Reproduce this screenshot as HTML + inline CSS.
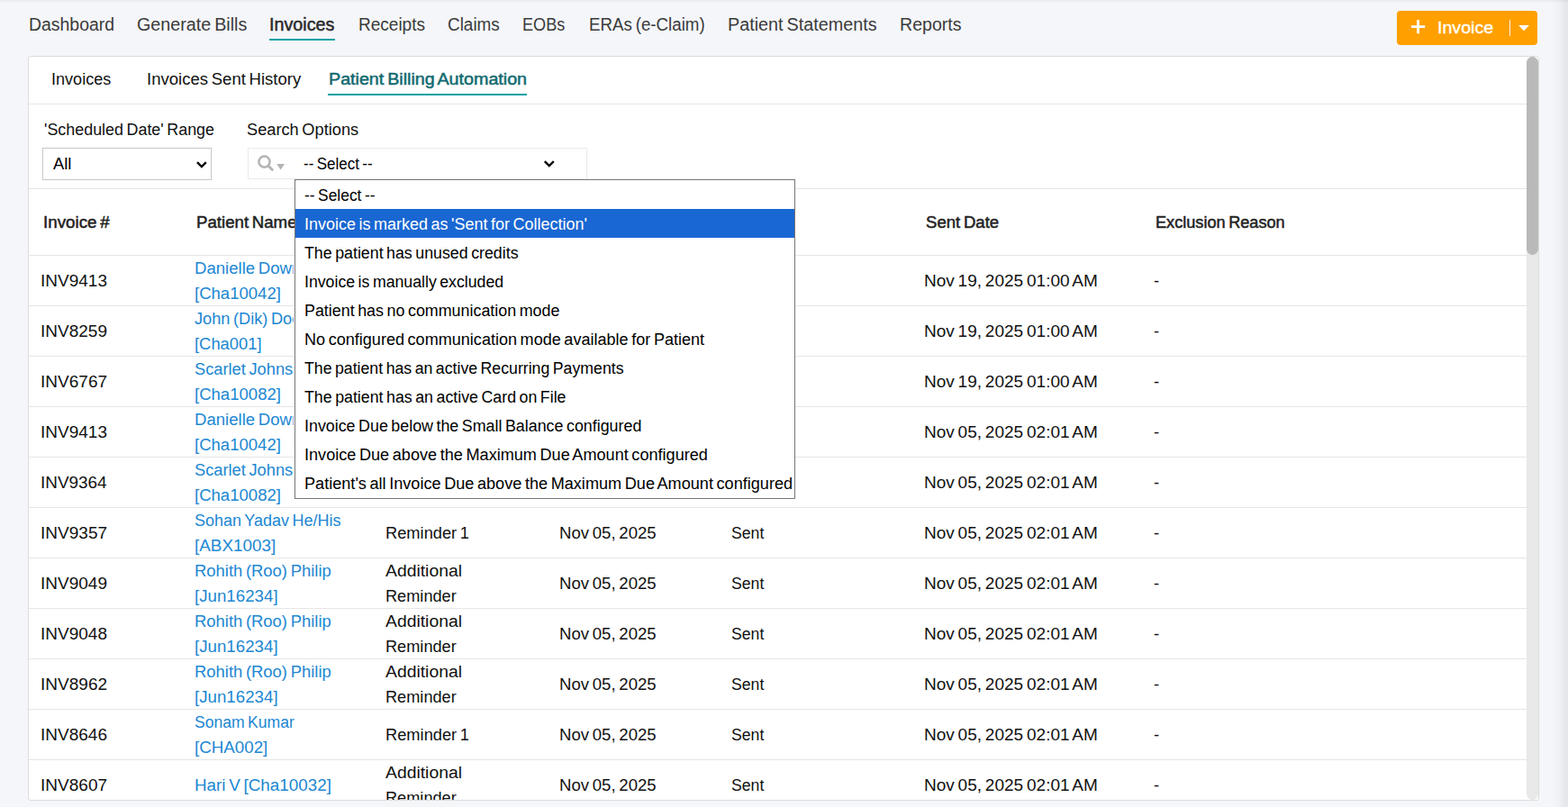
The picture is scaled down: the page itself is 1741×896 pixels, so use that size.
<!DOCTYPE html>
<html lang="en"><head><meta charset="utf-8"><title>Invoices - Patient Billing Automation</title>
<style>
*{box-sizing:border-box;margin:0;padding:0}
html,body{width:1741px;height:896px;overflow:hidden;background:#f5f6fa}
body{font-family:"Liberation Sans",sans-serif;color:#111;position:relative}
.t{position:absolute;display:block;white-space:nowrap;transform-origin:0 0;text-decoration:none;word-spacing:-0.08em}
#app{position:absolute;left:0;top:0;width:1741px;height:896px;overflow:hidden;background:#f5f6fa}
.topshadow{position:absolute;left:0;top:0;width:1741px;height:4px;background:linear-gradient(to bottom,rgba(0,0,0,.06),rgba(0,0,0,.028) 38%,rgba(0,0,0,.008) 70%,rgba(0,0,0,0))}
.rightshadow{position:absolute;right:0;top:0;width:18px;height:896px;background:linear-gradient(to right,rgba(0,0,0,0),rgba(0,0,0,.02) 44%,rgba(0,0,0,.05) 72%,rgba(0,0,0,.066))}
.topnav{position:absolute;left:0;top:0;width:1741px;height:62px}
.navline{position:absolute;left:299px;top:43px;width:73px;height:2px;background:#0aa1a4}
.btn{position:absolute;left:1551px;top:12px;width:156px;height:38px;border:0;border-radius:4px;background:#ffa000;font-family:inherit;display:block}
.btn svg{position:absolute;left:0;top:0}
.card{position:absolute;left:31px;top:62px;width:1678px;height:827px;background:#fff;border:1px solid #dcdcdc;border-radius:3px;overflow:hidden}
.tabs{position:absolute;left:0;top:0;width:1663px;height:53px;border-bottom:1px solid #e6e6e6}
.tabline{position:absolute;left:332px;top:41px;width:221px;height:2px;background:#0aa1a4}
.filters{position:absolute;left:0;top:53px;width:1663px;height:94px;border-bottom:1px solid #e6e6e6}
.sel{position:absolute;left:15px;top:48px;width:188px;height:36px;border:1px solid #c6c6c6;background:#fff}
.srch{position:absolute;left:243px;top:48px;width:377px;height:35px;border:1px solid #ebebee;background:#fff}
.ico{position:absolute;left:0;top:0}
.thead{position:absolute;left:0;top:147px;width:1663px;height:74px;border-bottom:1px solid #e6e6e6}
.row{position:absolute;left:0;width:1663px;height:56px;border-bottom:1px solid #e6e6e6}
.cell{position:absolute;left:0;top:0}
.cell.clip{width:294px;height:55px;overflow:hidden}
.scroll{position:absolute;left:1663px;top:0;width:13px;height:825px;background:#e8e8e8;border-radius:7px}
.thumb{position:absolute;left:0;top:0;width:13px;height:220px;background:#b9b9b9;border-radius:6.5px}
.dropdown{position:absolute;left:327px;top:199px;width:556px;height:355px;background:#fff;border:1px solid #767676;list-style:none}
.dropdown li{position:absolute;left:0;width:554px;height:32px}
.dropdown li.hl{background:#1967d2}
</style></head><body>
<div id="app">
<div class="topshadow"></div><div class="rightshadow"></div>
<nav class="topnav">
<a class="t" style="left:31.69px;top:16.00px;font-size:19.5px;line-height:22px;transform:scaleX(0.9966);color:#3b3b3b;">Dashboard</a>
<a class="t" style="left:151.69px;top:16.00px;font-size:19.5px;line-height:22px;transform:scaleX(1.0119);color:#3b3b3b;">Generate Bills</a>
<a class="t on" style="left:299.40px;top:15.80px;font-size:19.5px;line-height:22px;transform:scaleX(1.0121);color:#2a2a2a;-webkit-text-stroke:0.5px currentColor;">Invoices</a>
<a class="t" style="left:397.82px;top:16.00px;font-size:19.5px;line-height:22px;transform:scaleX(0.9753);color:#3b3b3b;">Receipts</a>
<a class="t" style="left:497.35px;top:16.00px;font-size:19.5px;line-height:22px;transform:scaleX(0.9705);color:#3b3b3b;">Claims</a>
<a class="t" style="left:580.12px;top:16.00px;font-size:19.5px;line-height:22px;transform:scaleX(0.9302);color:#3b3b3b;">EOBs</a>
<a class="t" style="left:653.86px;top:16.00px;font-size:19.5px;line-height:22px;transform:scaleX(0.9615);color:#3b3b3b;">ERAs (e-Claim)</a>
<a class="t" style="left:807.58px;top:16.00px;font-size:19.5px;line-height:22px;transform:scaleX(1.0145);color:#3b3b3b;">Patient Statements</a>
<a class="t" style="left:998.61px;top:16.00px;font-size:19.5px;line-height:22px;transform:scaleX(1.0047);color:#3b3b3b;">Reports</a>
<i class="navline"></i>
</nav>
<button class="btn" type="button">
<svg width="156" height="38" viewBox="0 0 156 38"><path d="M16 17.6h15.2M23.6 10v15.2" stroke="#fff" stroke-width="2.9" fill="none"/><path d="M125.5 10v18" stroke="#fff" stroke-width="1" opacity=".85"/><path d="M135 16h12l-6 6.2z" fill="#fff"/></svg>
<span class="t bt" style="left:44.97px;top:7.60px;font-size:18.6px;line-height:21px;transform:scaleX(1.0546);color:#fff;-webkit-text-stroke:0.35px #fff;">Invoice</span>
</button>
<main class="card">
<div class="tabs">
<a class="t" style="left:25.39px;top:15.00px;font-size:18px;line-height:20px;transform:scaleX(1.0031);color:#111;">Invoices</a>
<a class="t" style="left:131.25px;top:15.00px;font-size:18px;line-height:20px;transform:scaleX(1.0302);color:#111;">Invoices Sent History</a>
<a class="t on" style="left:333.18px;top:14.80px;font-size:18px;line-height:20px;transform:scaleX(1.0935);color:#116a70;-webkit-text-stroke:0.5px currentColor;">Patient Billing Automation</a>
<i class="tabline"></i>
</div>
<div class="filters">
<label class="t" style="left:16.65px;top:18.00px;font-size:18px;line-height:20px;transform:scaleX(0.9941);color:#111;">'Scheduled Date' Range</label>
<label class="t" style="left:242.33px;top:18.00px;font-size:18px;line-height:20px;transform:scaleX(1.0128);color:#111;">Search Options</label>
<div class="sel">
<span class="t" style="left:10.96px;top:7.00px;font-size:18px;line-height:20px;transform:scaleX(1.0195);color:#000;">All</span>
<svg class="ico" width="186" height="34" viewBox="0 0 186 34"><path d="M171 15.1l4.9 4.9 4.9-4.9" stroke="#000" stroke-width="2.3" fill="none"/></svg>
</div>
<div class="srch">
<svg class="ico" width="375" height="33" viewBox="0 0 375 33"><circle cx="17.5" cy="14.6" r="6.1" stroke="#b3b3b3" stroke-width="2.5" fill="none"/><path d="M22.1 19.2l4.2 4.2" stroke="#b3b3b3" stroke-width="2.8" stroke-linecap="round"/><path d="M31.2 17h8.8l-4.4 6.6z" fill="#b3b3b3"/><path d="M328.8 14.1l5 5 5-5" stroke="#000" stroke-width="2.3" fill="none"/></svg>
<span class="t" style="left:61.12px;top:7.00px;font-size:18px;line-height:20px;transform:scaleX(0.9443);color:#000;">-- Select --</span>
</div>
</div>
<div class="thead" role="row">
<span class="t" style="left:15.74px;top:26.80px;font-size:18px;line-height:20px;transform:scaleX(1.0425);color:#222;-webkit-text-stroke:0.5px currentColor;">Invoice #</span>
<span class="t" style="left:186.42px;top:26.80px;font-size:18px;line-height:20px;transform:scaleX(1.0363);color:#222;-webkit-text-stroke:0.5px currentColor;">Patient Name</span>
<span class="t" style="left:398.61px;top:26.80px;font-size:18px;line-height:20px;transform:scaleX(0.9918);color:#222;-webkit-text-stroke:0.5px currentColor;">Reminder Type</span>
<span class="t" style="left:591.45px;top:26.80px;font-size:18px;line-height:20px;transform:scaleX(1.0026);color:#222;-webkit-text-stroke:0.5px currentColor;">Scheduled Date</span>
<span class="t" style="left:782.39px;top:26.80px;font-size:18px;line-height:20px;transform:scaleX(1.0206);color:#222;-webkit-text-stroke:0.5px currentColor;">Status</span>
<span class="t" style="left:996.38px;top:26.80px;font-size:18px;line-height:20px;transform:scaleX(1.0326);color:#222;-webkit-text-stroke:0.5px currentColor;">Sent Date</span>
<span class="t" style="left:1251.35px;top:26.80px;font-size:18px;line-height:20px;transform:scaleX(1.0072);color:#222;-webkit-text-stroke:0.5px currentColor;">Exclusion Reason</span>
</div>
<div class="row" role="row" style="top:221px">
<div class="cell c1" role="cell"><span class="t" style="left:13.10px;top:18.00px;font-size:18px;line-height:20px;transform:scaleX(1.0564);color:#111;">INV9413</span></div>
<div class="cell c2 clip" role="cell"><a class="t" style="left:183.97px;top:4.00px;font-size:18px;line-height:20px;transform:scaleX(1.0326);color:#2087d2;">Danielle Downey</a><a class="t" style="left:183.97px;top:32.00px;font-size:18px;line-height:20px;transform:scaleX(1.0300);color:#2087d2;">[Cha10042]</a></div>
<div class="cell c3" role="cell"><span class="t" style="left:396.06px;top:18.00px;font-size:18px;line-height:20px;transform:scaleX(1.0151);color:#111;">Reminder 1</span></div>
<div class="cell c4" role="cell"><span class="t" style="left:588.86px;top:18.00px;font-size:18px;line-height:20px;transform:scaleX(1.0332);color:#111;">Nov 19, 2025</span></div>
<div class="cell c5" role="cell"><span class="t" style="left:779.96px;top:18.00px;font-size:18px;line-height:20px;transform:scaleX(0.9818);color:#111;">Sent</span></div>
<div class="cell c6" role="cell"><span class="t" style="left:993.76px;top:18.00px;font-size:18px;line-height:20px;transform:scaleX(1.0576);color:#111;">Nov 19, 2025 01:00 AM</span></div>
<div class="cell c7" role="cell"><span class="t" style="left:1249.19px;top:18.00px;font-size:18px;line-height:20px;transform:scaleX(1.0176);color:#111;">-</span></div>
</div>
<div class="row" role="row" style="top:277px">
<div class="cell c1" role="cell"><span class="t" style="left:13.10px;top:18.00px;font-size:18px;line-height:20px;transform:scaleX(1.0559);color:#111;">INV8259</span></div>
<div class="cell c2 clip" role="cell"><a class="t" style="left:183.97px;top:4.00px;font-size:18px;line-height:20px;transform:scaleX(1.0094);color:#2087d2;">John (Dik) Doe</a><a class="t" style="left:183.97px;top:32.00px;font-size:18px;line-height:20px;transform:scaleX(1.0215);color:#2087d2;">[Cha001]</a></div>
<div class="cell c3" role="cell"><span class="t" style="left:396.06px;top:18.00px;font-size:18px;line-height:20px;transform:scaleX(1.0151);color:#111;">Reminder 1</span></div>
<div class="cell c4" role="cell"><span class="t" style="left:588.86px;top:18.00px;font-size:18px;line-height:20px;transform:scaleX(1.0332);color:#111;">Nov 19, 2025</span></div>
<div class="cell c5" role="cell"><span class="t" style="left:779.96px;top:18.00px;font-size:18px;line-height:20px;transform:scaleX(0.9818);color:#111;">Sent</span></div>
<div class="cell c6" role="cell"><span class="t" style="left:993.76px;top:18.00px;font-size:18px;line-height:20px;transform:scaleX(1.0576);color:#111;">Nov 19, 2025 01:00 AM</span></div>
<div class="cell c7" role="cell"><span class="t" style="left:1249.19px;top:18.00px;font-size:18px;line-height:20px;transform:scaleX(1.0176);color:#111;">-</span></div>
</div>
<div class="row" role="row" style="top:333px">
<div class="cell c1" role="cell"><span class="t" style="left:13.10px;top:18.00px;font-size:18px;line-height:20px;transform:scaleX(1.0578);color:#111;">INV6767</span></div>
<div class="cell c2 clip" role="cell"><a class="t" style="left:183.97px;top:4.00px;font-size:18px;line-height:20px;transform:scaleX(1.0149);color:#2087d2;">Scarlet Johnson</a><a class="t" style="left:183.97px;top:32.00px;font-size:18px;line-height:20px;transform:scaleX(1.0307);color:#2087d2;">[Cha10082]</a></div>
<div class="cell c3" role="cell"><span class="t" style="left:396.06px;top:18.00px;font-size:18px;line-height:20px;transform:scaleX(1.0151);color:#111;">Reminder 1</span></div>
<div class="cell c4" role="cell"><span class="t" style="left:588.86px;top:18.00px;font-size:18px;line-height:20px;transform:scaleX(1.0332);color:#111;">Nov 19, 2025</span></div>
<div class="cell c5" role="cell"><span class="t" style="left:779.96px;top:18.00px;font-size:18px;line-height:20px;transform:scaleX(0.9818);color:#111;">Sent</span></div>
<div class="cell c6" role="cell"><span class="t" style="left:993.76px;top:18.00px;font-size:18px;line-height:20px;transform:scaleX(1.0576);color:#111;">Nov 19, 2025 01:00 AM</span></div>
<div class="cell c7" role="cell"><span class="t" style="left:1249.19px;top:18.00px;font-size:18px;line-height:20px;transform:scaleX(1.0176);color:#111;">-</span></div>
</div>
<div class="row" role="row" style="top:389px">
<div class="cell c1" role="cell"><span class="t" style="left:13.10px;top:18.00px;font-size:18px;line-height:20px;transform:scaleX(1.0564);color:#111;">INV9413</span></div>
<div class="cell c2 clip" role="cell"><a class="t" style="left:183.97px;top:4.00px;font-size:18px;line-height:20px;transform:scaleX(1.0326);color:#2087d2;">Danielle Downey</a><a class="t" style="left:183.97px;top:32.00px;font-size:18px;line-height:20px;transform:scaleX(1.0300);color:#2087d2;">[Cha10042]</a></div>
<div class="cell c3" role="cell"><span class="t" style="left:396.06px;top:4.00px;font-size:18px;line-height:20px;transform:scaleX(1.0749);color:#111;">Additional</span><span class="t" style="left:396.06px;top:32.00px;font-size:18px;line-height:20px;transform:scaleX(1.0090);color:#111;">Reminder</span></div>
<div class="cell c4" role="cell"><span class="t" style="left:588.86px;top:18.00px;font-size:18px;line-height:20px;transform:scaleX(1.0332);color:#111;">Nov 05, 2025</span></div>
<div class="cell c5" role="cell"><span class="t" style="left:779.96px;top:18.00px;font-size:18px;line-height:20px;transform:scaleX(0.9818);color:#111;">Sent</span></div>
<div class="cell c6" role="cell"><span class="t" style="left:993.76px;top:18.00px;font-size:18px;line-height:20px;transform:scaleX(1.0576);color:#111;">Nov 05, 2025 02:01 AM</span></div>
<div class="cell c7" role="cell"><span class="t" style="left:1249.19px;top:18.00px;font-size:18px;line-height:20px;transform:scaleX(1.0176);color:#111;">-</span></div>
</div>
<div class="row" role="row" style="top:445px">
<div class="cell c1" role="cell"><span class="t" style="left:13.10px;top:18.00px;font-size:18px;line-height:20px;transform:scaleX(1.0514);color:#111;">INV9364</span></div>
<div class="cell c2 clip" role="cell"><a class="t" style="left:183.97px;top:4.00px;font-size:18px;line-height:20px;transform:scaleX(1.0149);color:#2087d2;">Scarlet Johnson</a><a class="t" style="left:183.97px;top:32.00px;font-size:18px;line-height:20px;transform:scaleX(1.0307);color:#2087d2;">[Cha10082]</a></div>
<div class="cell c3" role="cell"><span class="t" style="left:396.06px;top:18.00px;font-size:18px;line-height:20px;transform:scaleX(1.0151);color:#111;">Reminder 1</span></div>
<div class="cell c4" role="cell"><span class="t" style="left:588.86px;top:18.00px;font-size:18px;line-height:20px;transform:scaleX(1.0332);color:#111;">Nov 05, 2025</span></div>
<div class="cell c5" role="cell"><span class="t" style="left:779.96px;top:18.00px;font-size:18px;line-height:20px;transform:scaleX(0.9818);color:#111;">Sent</span></div>
<div class="cell c6" role="cell"><span class="t" style="left:993.76px;top:18.00px;font-size:18px;line-height:20px;transform:scaleX(1.0576);color:#111;">Nov 05, 2025 02:01 AM</span></div>
<div class="cell c7" role="cell"><span class="t" style="left:1249.19px;top:18.00px;font-size:18px;line-height:20px;transform:scaleX(1.0176);color:#111;">-</span></div>
</div>
<div class="row" role="row" style="top:501px">
<div class="cell c1" role="cell"><span class="t" style="left:13.10px;top:18.00px;font-size:18px;line-height:20px;transform:scaleX(1.0578);color:#111;">INV9357</span></div>
<div class="cell c2" role="cell"><a class="t" style="left:183.97px;top:4.00px;font-size:18px;line-height:20px;transform:scaleX(1.0003);color:#2087d2;">Sohan Yadav He/His</a><a class="t" style="left:183.97px;top:32.00px;font-size:18px;line-height:20px;transform:scaleX(1.0483);color:#2087d2;">[ABX1003]</a></div>
<div class="cell c3" role="cell"><span class="t" style="left:396.06px;top:18.00px;font-size:18px;line-height:20px;transform:scaleX(1.0151);color:#111;">Reminder 1</span></div>
<div class="cell c4" role="cell"><span class="t" style="left:588.86px;top:18.00px;font-size:18px;line-height:20px;transform:scaleX(1.0332);color:#111;">Nov 05, 2025</span></div>
<div class="cell c5" role="cell"><span class="t" style="left:779.96px;top:18.00px;font-size:18px;line-height:20px;transform:scaleX(0.9818);color:#111;">Sent</span></div>
<div class="cell c6" role="cell"><span class="t" style="left:993.76px;top:18.00px;font-size:18px;line-height:20px;transform:scaleX(1.0576);color:#111;">Nov 05, 2025 02:01 AM</span></div>
<div class="cell c7" role="cell"><span class="t" style="left:1249.19px;top:18.00px;font-size:18px;line-height:20px;transform:scaleX(1.0176);color:#111;">-</span></div>
</div>
<div class="row" role="row" style="top:557px">
<div class="cell c1" role="cell"><span class="t" style="left:13.10px;top:18.00px;font-size:18px;line-height:20px;transform:scaleX(1.0559);color:#111;">INV9049</span></div>
<div class="cell c2" role="cell"><a class="t" style="left:183.97px;top:4.00px;font-size:18px;line-height:20px;transform:scaleX(1.0239);color:#2087d2;">Rohith (Roo) Philip</a><a class="t" style="left:183.97px;top:32.00px;font-size:18px;line-height:20px;transform:scaleX(1.0394);color:#2087d2;">[Jun16234]</a></div>
<div class="cell c3" role="cell"><span class="t" style="left:396.06px;top:4.00px;font-size:18px;line-height:20px;transform:scaleX(1.0749);color:#111;">Additional</span><span class="t" style="left:396.06px;top:32.00px;font-size:18px;line-height:20px;transform:scaleX(1.0090);color:#111;">Reminder</span></div>
<div class="cell c4" role="cell"><span class="t" style="left:588.86px;top:18.00px;font-size:18px;line-height:20px;transform:scaleX(1.0332);color:#111;">Nov 05, 2025</span></div>
<div class="cell c5" role="cell"><span class="t" style="left:779.96px;top:18.00px;font-size:18px;line-height:20px;transform:scaleX(0.9818);color:#111;">Sent</span></div>
<div class="cell c6" role="cell"><span class="t" style="left:993.76px;top:18.00px;font-size:18px;line-height:20px;transform:scaleX(1.0576);color:#111;">Nov 05, 2025 02:01 AM</span></div>
<div class="cell c7" role="cell"><span class="t" style="left:1249.19px;top:18.00px;font-size:18px;line-height:20px;transform:scaleX(1.0176);color:#111;">-</span></div>
</div>
<div class="row" role="row" style="top:613px">
<div class="cell c1" role="cell"><span class="t" style="left:13.10px;top:18.00px;font-size:18px;line-height:20px;transform:scaleX(1.0557);color:#111;">INV9048</span></div>
<div class="cell c2" role="cell"><a class="t" style="left:183.97px;top:4.00px;font-size:18px;line-height:20px;transform:scaleX(1.0239);color:#2087d2;">Rohith (Roo) Philip</a><a class="t" style="left:183.97px;top:32.00px;font-size:18px;line-height:20px;transform:scaleX(1.0394);color:#2087d2;">[Jun16234]</a></div>
<div class="cell c3" role="cell"><span class="t" style="left:396.06px;top:4.00px;font-size:18px;line-height:20px;transform:scaleX(1.0749);color:#111;">Additional</span><span class="t" style="left:396.06px;top:32.00px;font-size:18px;line-height:20px;transform:scaleX(1.0090);color:#111;">Reminder</span></div>
<div class="cell c4" role="cell"><span class="t" style="left:588.86px;top:18.00px;font-size:18px;line-height:20px;transform:scaleX(1.0332);color:#111;">Nov 05, 2025</span></div>
<div class="cell c5" role="cell"><span class="t" style="left:779.96px;top:18.00px;font-size:18px;line-height:20px;transform:scaleX(0.9818);color:#111;">Sent</span></div>
<div class="cell c6" role="cell"><span class="t" style="left:993.76px;top:18.00px;font-size:18px;line-height:20px;transform:scaleX(1.0576);color:#111;">Nov 05, 2025 02:01 AM</span></div>
<div class="cell c7" role="cell"><span class="t" style="left:1249.19px;top:18.00px;font-size:18px;line-height:20px;transform:scaleX(1.0176);color:#111;">-</span></div>
</div>
<div class="row" role="row" style="top:669px">
<div class="cell c1" role="cell"><span class="t" style="left:13.10px;top:18.00px;font-size:18px;line-height:20px;transform:scaleX(1.0578);color:#111;">INV8962</span></div>
<div class="cell c2" role="cell"><a class="t" style="left:183.97px;top:4.00px;font-size:18px;line-height:20px;transform:scaleX(1.0239);color:#2087d2;">Rohith (Roo) Philip</a><a class="t" style="left:183.97px;top:32.00px;font-size:18px;line-height:20px;transform:scaleX(1.0394);color:#2087d2;">[Jun16234]</a></div>
<div class="cell c3" role="cell"><span class="t" style="left:396.06px;top:4.00px;font-size:18px;line-height:20px;transform:scaleX(1.0749);color:#111;">Additional</span><span class="t" style="left:396.06px;top:32.00px;font-size:18px;line-height:20px;transform:scaleX(1.0090);color:#111;">Reminder</span></div>
<div class="cell c4" role="cell"><span class="t" style="left:588.86px;top:18.00px;font-size:18px;line-height:20px;transform:scaleX(1.0332);color:#111;">Nov 05, 2025</span></div>
<div class="cell c5" role="cell"><span class="t" style="left:779.96px;top:18.00px;font-size:18px;line-height:20px;transform:scaleX(0.9818);color:#111;">Sent</span></div>
<div class="cell c6" role="cell"><span class="t" style="left:993.76px;top:18.00px;font-size:18px;line-height:20px;transform:scaleX(1.0576);color:#111;">Nov 05, 2025 02:01 AM</span></div>
<div class="cell c7" role="cell"><span class="t" style="left:1249.19px;top:18.00px;font-size:18px;line-height:20px;transform:scaleX(1.0176);color:#111;">-</span></div>
</div>
<div class="row" role="row" style="top:725px">
<div class="cell c1" role="cell"><span class="t" style="left:13.10px;top:18.00px;font-size:18px;line-height:20px;transform:scaleX(1.0559);color:#111;">INV8646</span></div>
<div class="cell c2" role="cell"><a class="t" style="left:183.97px;top:4.00px;font-size:18px;line-height:20px;transform:scaleX(0.9752);color:#2087d2;">Sonam Kumar</a><a class="t" style="left:183.97px;top:32.00px;font-size:18px;line-height:20px;transform:scaleX(1.0416);color:#2087d2;">[CHA002]</a></div>
<div class="cell c3" role="cell"><span class="t" style="left:396.06px;top:18.00px;font-size:18px;line-height:20px;transform:scaleX(1.0151);color:#111;">Reminder 1</span></div>
<div class="cell c4" role="cell"><span class="t" style="left:588.86px;top:18.00px;font-size:18px;line-height:20px;transform:scaleX(1.0332);color:#111;">Nov 05, 2025</span></div>
<div class="cell c5" role="cell"><span class="t" style="left:779.96px;top:18.00px;font-size:18px;line-height:20px;transform:scaleX(0.9818);color:#111;">Sent</span></div>
<div class="cell c6" role="cell"><span class="t" style="left:993.76px;top:18.00px;font-size:18px;line-height:20px;transform:scaleX(1.0576);color:#111;">Nov 05, 2025 02:01 AM</span></div>
<div class="cell c7" role="cell"><span class="t" style="left:1249.19px;top:18.00px;font-size:18px;line-height:20px;transform:scaleX(1.0176);color:#111;">-</span></div>
</div>
<div class="row" role="row" style="top:781px">
<div class="cell c1" role="cell"><span class="t" style="left:13.10px;top:18.00px;font-size:18px;line-height:20px;transform:scaleX(1.0578);color:#111;">INV8607</span></div>
<div class="cell c2" role="cell"><a class="t" style="left:183.97px;top:18.00px;font-size:18px;line-height:20px;transform:scaleX(1.0461);color:#2087d2;">Hari V [Cha10032]</a></div>
<div class="cell c3" role="cell"><span class="t" style="left:396.06px;top:4.00px;font-size:18px;line-height:20px;transform:scaleX(1.0749);color:#111;">Additional</span><span class="t" style="left:396.06px;top:32.00px;font-size:18px;line-height:20px;transform:scaleX(1.0090);color:#111;">Reminder</span></div>
<div class="cell c4" role="cell"><span class="t" style="left:588.86px;top:18.00px;font-size:18px;line-height:20px;transform:scaleX(1.0332);color:#111;">Nov 05, 2025</span></div>
<div class="cell c5" role="cell"><span class="t" style="left:779.96px;top:18.00px;font-size:18px;line-height:20px;transform:scaleX(0.9818);color:#111;">Sent</span></div>
<div class="cell c6" role="cell"><span class="t" style="left:993.76px;top:18.00px;font-size:18px;line-height:20px;transform:scaleX(1.0576);color:#111;">Nov 05, 2025 02:01 AM</span></div>
<div class="cell c7" role="cell"><span class="t" style="left:1249.19px;top:18.00px;font-size:18px;line-height:20px;transform:scaleX(1.0176);color:#111;">-</span></div>
</div>
<div class="scroll"><div class="thumb"></div></div>
</main>
<ul class="dropdown">
<li class="" style="top:0px"><span class="t" style="left:9.68px;top:7.00px;font-size:18px;line-height:20px;transform:scaleX(0.9677);color:#000;">-- Select --</span></li>
<li class="hl" style="top:32px"><span class="t" style="left:9.68px;top:7.00px;font-size:18px;line-height:20px;transform:scaleX(0.9987);color:#fff;">Invoice is marked as 'Sent for Collection'</span></li>
<li class="" style="top:64px"><span class="t" style="left:9.68px;top:7.00px;font-size:18px;line-height:20px;transform:scaleX(0.9881);color:#000;">The patient has unused credits</span></li>
<li class="" style="top:96px"><span class="t" style="left:9.68px;top:7.00px;font-size:18px;line-height:20px;transform:scaleX(0.9835);color:#000;">Invoice is manually excluded</span></li>
<li class="" style="top:128px"><span class="t" style="left:9.68px;top:7.00px;font-size:18px;line-height:20px;transform:scaleX(0.9930);color:#000;">Patient has no communication mode</span></li>
<li class="" style="top:160px"><span class="t" style="left:9.68px;top:7.00px;font-size:18px;line-height:20px;transform:scaleX(1.0034);color:#000;">No configured communication mode available for Patient</span></li>
<li class="" style="top:192px"><span class="t" style="left:9.68px;top:7.00px;font-size:18px;line-height:20px;transform:scaleX(0.9832);color:#000;">The patient has an active Recurring Payments</span></li>
<li class="" style="top:224px"><span class="t" style="left:9.68px;top:7.00px;font-size:18px;line-height:20px;transform:scaleX(0.9877);color:#000;">The patient has an active Card on File</span></li>
<li class="" style="top:256px"><span class="t" style="left:9.68px;top:7.00px;font-size:18px;line-height:20px;transform:scaleX(0.9913);color:#000;">Invoice Due below the Small Balance configured</span></li>
<li class="" style="top:288px"><span class="t" style="left:9.68px;top:7.00px;font-size:18px;line-height:20px;transform:scaleX(1.0062);color:#000;">Invoice Due above the Maximum Due Amount configured</span></li>
<li class="" style="top:320px"><span class="t" style="left:9.68px;top:7.00px;font-size:18px;line-height:20px;transform:scaleX(1.0062);color:#000;">Patient's all Invoice Due above the Maximum Due Amount configured</span></li>
</ul>
</div></body></html>
